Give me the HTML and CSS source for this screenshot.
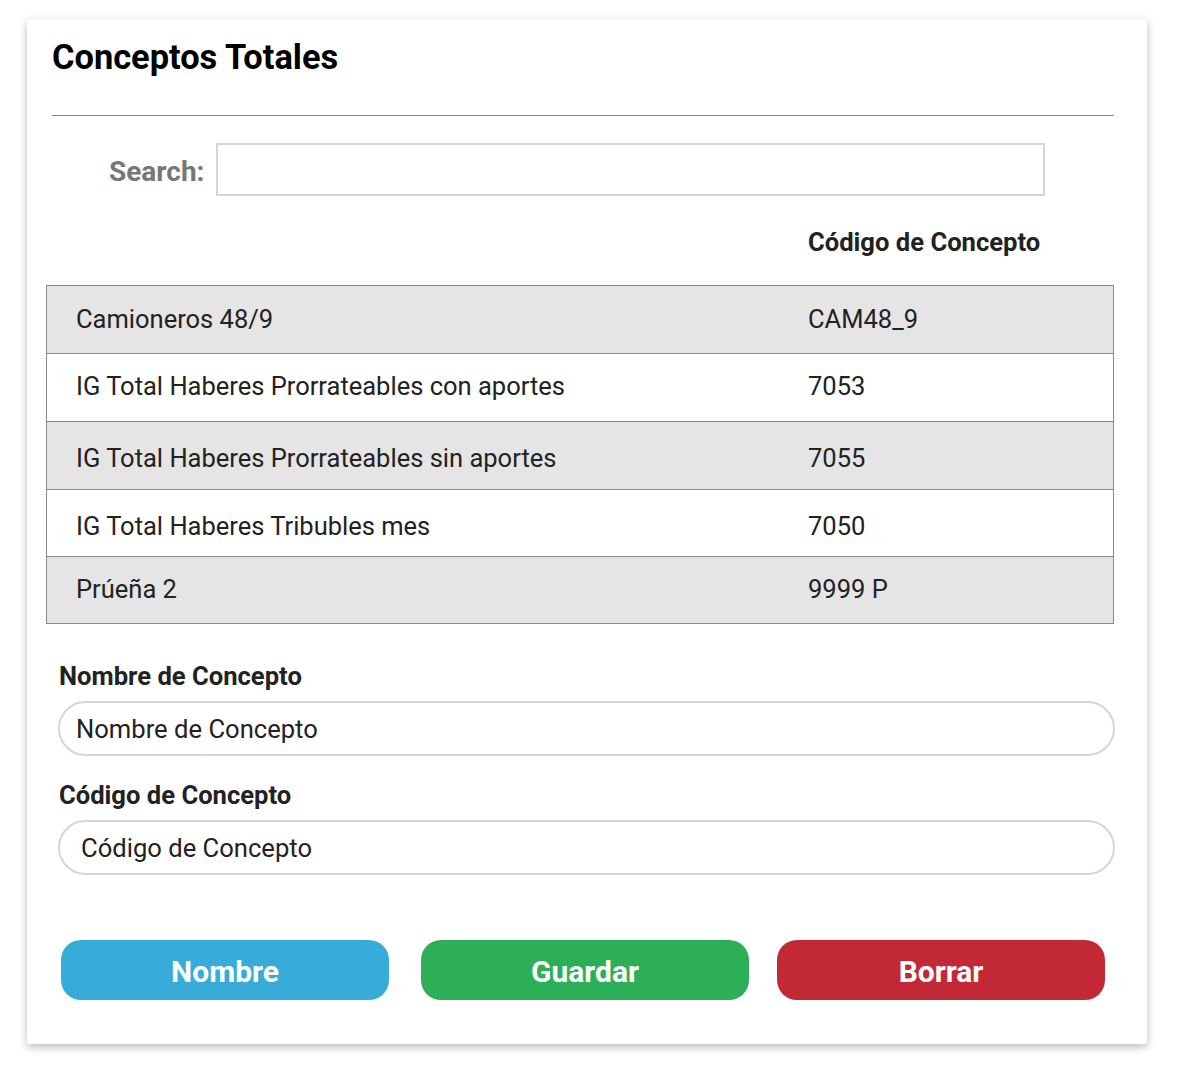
FILE: index.html
```html
<!DOCTYPE html>
<html lang="es">
<head>
<meta charset="utf-8">
<title>Conceptos Totales</title>
<link rel="stylesheet" href="styles.css">
</head>
<body>
<div class="card">
  <h1 class="title">Conceptos Totales</h1>
  <hr class="divider">
  <div class="search">
    <label class="search-label" for="q">Search:</label>
    <input class="search-input" id="q" type="text">
  </div>
  <div class="table">
    <div class="thead">
      <div class="cell"></div>
      <div class="cell">Código de Concepto</div>
    </div>
    <div class="tbody">
      <div class="row odd r1"><div class="cell">Camioneros 48/9</div><div class="cell">CAM48_9</div></div>
      <div class="row r2"><div class="cell">IG Total Haberes Prorrateables con aportes</div><div class="cell">7053</div></div>
      <div class="row odd r3"><div class="cell">IG Total Haberes Prorrateables sin aportes</div><div class="cell">7055</div></div>
      <div class="row r4"><div class="cell">IG Total Haberes Tribubles mes</div><div class="cell">7050</div></div>
      <div class="row odd r5"><div class="cell">Prúeña 2</div><div class="cell">9999 P</div></div>
    </div>
  </div>
  <div class="form">
    <label class="field-label" for="nombre">Nombre de Concepto</label>
    <input class="field-input" id="nombre" type="text" placeholder="Nombre de Concepto">
    <label class="field-label second" for="codigo">Código de Concepto</label>
    <input class="field-input wide-pad" id="codigo" type="text" placeholder="Código de Concepto">
  </div>
  <div class="actions">
    <button class="btn btn-blue" type="button">Nombre</button>
    <button class="btn btn-green" type="button">Guardar</button>
    <button class="btn btn-red" type="button">Borrar</button>
  </div>
</div>
</body>
</html>
```
FILE: styles.css
```css
* { box-sizing: border-box; }
html, body { margin: 0; padding: 0; background: #ffffff; }
body {
  font-family: Roboto, "Liberation Sans", Arial, sans-serif;
  color: #222;
  padding-bottom: 36px;
}

.card {
  width: 1120px;
  height: 1025px;
  margin: 19px 0 0 27px;
  background: #fff;
  border-radius: 3px;
  box-shadow: 0 3px 8px rgba(0,0,0,0.28);
  padding: 18px 0 0 0;
  display: flex;
  flex-direction: column;
}

.title {
  margin: 0 0 0 25px;
  font-size: 34.4px;
  line-height: 40px;
  font-weight: 700;
  color: #000;
}

.divider {
  margin: 38px 33px 0 25px;
  border: 0;
  border-top: 1px solid #888;
  height: 0;
}

.search {
  display: flex;
  align-items: center;
  margin: 27px 0 0 0;
  padding-left: 82px;
}
.search-label {
  font-size: 28px;
  font-weight: 700;
  color: #777;
  margin-right: 11px;
  padding-top: 4px;
}
.search-input {
  width: 829px;
  height: 53px;
  border: 2px solid #d6d6d6;
  border-radius: 0;
  font: inherit;
  outline: none;
}

.table {
  margin: 31px 33px 0 19px;
}
.thead, .row {
  display: grid;
  grid-template-columns: 731px 1fr;
  align-items: center;
}
.thead {
  font-weight: 700;
  font-size: 25.6px;
  line-height: 30px;
  margin-bottom: 28px;
  color: #222;
}
.cell { padding-left: 30px; }
.row .cell:first-child { padding-left: 29px; }
.thead .cell:last-child { padding-left: 31px; }
.tbody {
  border: 1px solid #888;
}
.row {
  height: 67px;
  font-size: 25.5px;
  color: #222;
  background: #fff;
}
.row + .row { border-top: 1px solid #888; }
.row.odd { background: #e5e5e5; }
.row.r1 { padding-bottom: 2px; }
.row.r2 { height: 68px; padding-bottom: 4px; }
.row.r3 { height: 68px; padding-top: 4px; }
.row.r4 { padding-top: 5px; }
.row.r5 { padding-bottom: 3px; }

.form {
  display: flex;
  flex-direction: column;
  margin: 37px 33px 0 32px;
}
.field-label {
  font-size: 25.6px;
  line-height: 30px;
  font-weight: 700;
  color: #222;
  margin-left: 0;
}
.field-label.second { margin-top: 24px; }
.field-input {
  margin-top: 10px;
  margin-left: -1px;
  height: 55px;
  width: calc(100% + 2px);
  border: 2px solid #d6d6d6;
  border-radius: 28px;
  padding: 0 0 0 16px;
  font-family: Roboto, "Liberation Sans", Arial, sans-serif;
  font-size: 25.6px;
  color: #222;
  outline: none;
  background: #fff;
}
.field-input.wide-pad { padding-left: 21px; }
.field-input::placeholder { color: #222; opacity: 1; }

.actions {
  display: flex;
  margin: 65px 0 0 34px;
}
.btn {
  width: 328px;
  height: 60px;
  border: 0;
  border-radius: 20px;
  color: #fff;
  font-family: Roboto, "Liberation Sans", Arial, sans-serif;
  font-size: 30px;
  font-weight: 700;
  padding: 2px 0 0 0;
  cursor: pointer;
}
.btn-green { margin-left: 32px; }
.btn-red { margin-left: 28px; }
.btn-blue { background: #38acd8; }
.btn-green { background: #2daf57; }
.btn-red { background: #c32837; }
```
